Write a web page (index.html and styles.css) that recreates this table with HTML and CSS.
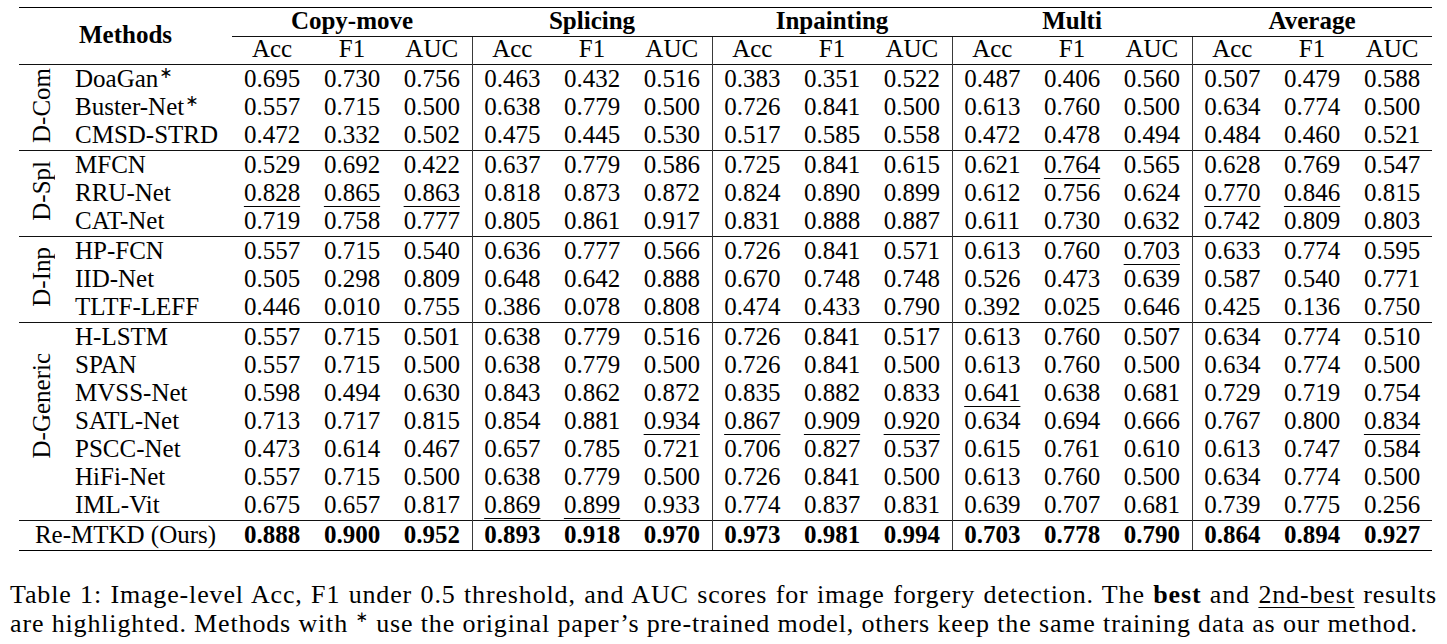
FILE: index.html
```html
<!DOCTYPE html>
<html>
<head>
<meta charset="utf-8">
<link rel="stylesheet" href="styles.css">
</head>
<body>
<div class="page">
<table class="results">
<colgroup>
<col class="c-grp"><col class="c-name">
<col class="c-num"><col class="c-num"><col class="c-num">
<col class="c-num"><col class="c-num"><col class="c-num">
<col class="c-num"><col class="c-num"><col class="c-num">
<col class="c-num"><col class="c-num"><col class="c-num">
<col class="c-num"><col class="c-num"><col class="c-num">
</colgroup>
<thead>
<tr class="h1">
<th class="methods" colspan="2" rowspan="2">Methods</th>
<th class="group" colspan="3">Copy-move</th>
<th class="group" colspan="3">Splicing</th>
<th class="group" colspan="3">Inpainting</th>
<th class="group" colspan="3">Multi</th>
<th class="group" colspan="3">Average</th>
</tr>
<tr class="h2">
<th>Acc</th><th>F1</th><th>AUC</th>
<th class="gs">Acc</th><th>F1</th><th>AUC</th>
<th class="gs">Acc</th><th>F1</th><th>AUC</th>
<th class="gs">Acc</th><th>F1</th><th>AUC</th>
<th class="gs">Acc</th><th>F1</th><th>AUC</th>
</tr>
</thead>
<tbody>
<tr class="first rule">
<td class="cat" rowspan="3"><span class="vlabel">D-Com</span></td>
<td class="name">DoaGan<sup class="ast">∗</sup></td>
<td>0.695</td><td>0.730</td><td>0.756</td>
<td class="gs">0.463</td><td>0.432</td><td>0.516</td>
<td class="gs">0.383</td><td>0.351</td><td>0.522</td>
<td class="gs">0.487</td><td>0.406</td><td>0.560</td>
<td class="gs">0.507</td><td>0.479</td><td>0.588</td>
</tr>
<tr>
<td class="name">Buster-Net<sup class="ast">∗</sup></td>
<td>0.557</td><td>0.715</td><td>0.500</td>
<td class="gs">0.638</td><td>0.779</td><td>0.500</td>
<td class="gs">0.726</td><td>0.841</td><td>0.500</td>
<td class="gs">0.613</td><td>0.760</td><td>0.500</td>
<td class="gs">0.634</td><td>0.774</td><td>0.500</td>
</tr>
<tr>
<td class="name">CMSD-STRD</td>
<td>0.472</td><td>0.332</td><td>0.502</td>
<td class="gs">0.475</td><td>0.445</td><td>0.530</td>
<td class="gs">0.517</td><td>0.585</td><td>0.558</td>
<td class="gs">0.472</td><td>0.478</td><td>0.494</td>
<td class="gs">0.484</td><td>0.460</td><td>0.521</td>
</tr>

<tr class="first rule">
<td class="cat" rowspan="3"><span class="vlabel">D-Spl</span></td>
<td class="name">MFCN</td>
<td>0.529</td><td>0.692</td><td>0.422</td>
<td class="gs">0.637</td><td>0.779</td><td>0.586</td>
<td class="gs">0.725</td><td>0.841</td><td>0.615</td>
<td class="gs">0.621</td><td><span class="u">0.764</span></td><td>0.565</td>
<td class="gs">0.628</td><td>0.769</td><td>0.547</td>
</tr>
<tr>
<td class="name">RRU-Net</td>
<td><span class="u">0.828</span></td><td><span class="u">0.865</span></td><td><span class="u">0.863</span></td>
<td class="gs">0.818</td><td>0.873</td><td>0.872</td>
<td class="gs">0.824</td><td>0.890</td><td>0.899</td>
<td class="gs">0.612</td><td>0.756</td><td>0.624</td>
<td class="gs"><span class="u">0.770</span></td><td><span class="u">0.846</span></td><td>0.815</td>
</tr>
<tr>
<td class="name">CAT-Net</td>
<td>0.719</td><td>0.758</td><td>0.777</td>
<td class="gs">0.805</td><td>0.861</td><td>0.917</td>
<td class="gs">0.831</td><td>0.888</td><td>0.887</td>
<td class="gs">0.611</td><td>0.730</td><td>0.632</td>
<td class="gs">0.742</td><td>0.809</td><td>0.803</td>
</tr>

<tr class="first rule">
<td class="cat" rowspan="3"><span class="vlabel">D-Inp</span></td>
<td class="name">HP-FCN</td>
<td>0.557</td><td>0.715</td><td>0.540</td>
<td class="gs">0.636</td><td>0.777</td><td>0.566</td>
<td class="gs">0.726</td><td>0.841</td><td>0.571</td>
<td class="gs">0.613</td><td>0.760</td><td><span class="u">0.703</span></td>
<td class="gs">0.633</td><td>0.774</td><td>0.595</td>
</tr>
<tr>
<td class="name">IID-Net</td>
<td>0.505</td><td>0.298</td><td>0.809</td>
<td class="gs">0.648</td><td>0.642</td><td>0.888</td>
<td class="gs">0.670</td><td>0.748</td><td>0.748</td>
<td class="gs">0.526</td><td>0.473</td><td>0.639</td>
<td class="gs">0.587</td><td>0.540</td><td>0.771</td>
</tr>
<tr>
<td class="name">TLTF-LEFF</td>
<td>0.446</td><td>0.010</td><td>0.755</td>
<td class="gs">0.386</td><td>0.078</td><td>0.808</td>
<td class="gs">0.474</td><td>0.433</td><td>0.790</td>
<td class="gs">0.392</td><td>0.025</td><td>0.646</td>
<td class="gs">0.425</td><td>0.136</td><td>0.750</td>
</tr>

<tr class="first rule">
<td class="cat generic" rowspan="7"><span class="vlabel">D-Generic</span></td>
<td class="name">H-LSTM</td>
<td>0.557</td><td>0.715</td><td>0.501</td>
<td class="gs">0.638</td><td>0.779</td><td>0.516</td>
<td class="gs">0.726</td><td>0.841</td><td>0.517</td>
<td class="gs">0.613</td><td>0.760</td><td>0.507</td>
<td class="gs">0.634</td><td>0.774</td><td>0.510</td>
</tr>
<tr>
<td class="name">SPAN</td>
<td>0.557</td><td>0.715</td><td>0.500</td>
<td class="gs">0.638</td><td>0.779</td><td>0.500</td>
<td class="gs">0.726</td><td>0.841</td><td>0.500</td>
<td class="gs">0.613</td><td>0.760</td><td>0.500</td>
<td class="gs">0.634</td><td>0.774</td><td>0.500</td>
</tr>
<tr>
<td class="name">MVSS-Net</td>
<td>0.598</td><td>0.494</td><td>0.630</td>
<td class="gs">0.843</td><td>0.862</td><td>0.872</td>
<td class="gs">0.835</td><td>0.882</td><td>0.833</td>
<td class="gs"><span class="u">0.641</span></td><td>0.638</td><td>0.681</td>
<td class="gs">0.729</td><td>0.719</td><td>0.754</td>
</tr>
<tr>
<td class="name">SATL-Net</td>
<td>0.713</td><td>0.717</td><td>0.815</td>
<td class="gs">0.854</td><td>0.881</td><td><span class="u">0.934</span></td>
<td class="gs"><span class="u">0.867</span></td><td><span class="u">0.909</span></td><td><span class="u">0.920</span></td>
<td class="gs">0.634</td><td>0.694</td><td>0.666</td>
<td class="gs">0.767</td><td>0.800</td><td><span class="u">0.834</span></td>
</tr>
<tr>
<td class="name">PSCC-Net</td>
<td>0.473</td><td>0.614</td><td>0.467</td>
<td class="gs">0.657</td><td>0.785</td><td>0.721</td>
<td class="gs">0.706</td><td>0.827</td><td>0.537</td>
<td class="gs">0.615</td><td>0.761</td><td>0.610</td>
<td class="gs">0.613</td><td>0.747</td><td>0.584</td>
</tr>
<tr>
<td class="name">HiFi-Net</td>
<td>0.557</td><td>0.715</td><td>0.500</td>
<td class="gs">0.638</td><td>0.779</td><td>0.500</td>
<td class="gs">0.726</td><td>0.841</td><td>0.500</td>
<td class="gs">0.613</td><td>0.760</td><td>0.500</td>
<td class="gs">0.634</td><td>0.774</td><td>0.500</td>
</tr>
<tr>
<td class="name">IML-Vit</td>
<td>0.675</td><td>0.657</td><td>0.817</td>
<td class="gs"><span class="u">0.869</span></td><td><span class="u">0.899</span></td><td>0.933</td>
<td class="gs">0.774</td><td>0.837</td><td>0.831</td>
<td class="gs">0.639</td><td>0.707</td><td>0.681</td>
<td class="gs">0.739</td><td>0.775</td><td>0.256</td>
</tr>

<tr class="ours rule">
<td class="ours-name" colspan="2">Re-MTKD (Ours)</td>
<td>0.888</td><td>0.900</td><td>0.952</td>
<td class="gs">0.893</td><td>0.918</td><td>0.970</td>
<td class="gs">0.973</td><td>0.981</td><td>0.994</td>
<td class="gs">0.703</td><td>0.778</td><td>0.790</td>
<td class="gs">0.864</td><td>0.894</td><td>0.927</td>
</tr>
</tbody>
</table>

<p class="caption"><span class="cap-line">Table 1: Image-level Acc, F1 under 0.5 threshold, and AUC scores for image forgery detection. The <b>best</b> and <span class="u2">2nd-best</span> results</span> are highlighted. Methods with <sup class="ast2">∗</sup> use the original paper’s pre-trained model, others keep the same training data as our method.</p>
</div>
</body>
</html>
```
FILE: styles.css
```css
html, body {
  margin: 0;
  padding: 0;
  background: #ffffff;
}

.page {
  padding: 7px 0 0 10px;
  width: 1427px;
  color: #000;
  font-family: "Liberation Serif", "Times New Roman", "DejaVu Serif", serif;
}

.results {
  margin-left: 9px;
  width: 1413px;
  table-layout: fixed;
  border-collapse: collapse;
  font-size: 25px;
  line-height: 24px;
}

.c-grp { width: 44px; }
.c-name { width: 169px; }
.c-num { width: 80px; }

.results th,
.results td {
  padding: 1px 0 3px;
  text-align: center;
  vertical-align: middle;
  white-space: nowrap;
}

.results thead tr.h1 th {
  border-top: 1px solid #000;
  font-weight: bold;
  padding-top: 1px;
  padding-bottom: 3px;
}

.results thead tr.h1 th.group {
  border-bottom: 1px solid #111;
}

.results thead tr.h1 th.methods {
  padding-top: 0;
  padding-bottom: 2px;
}

.results thead tr.h2 th {
  font-weight: normal;
  padding-top: 0;
  padding-bottom: 3px;
}

.results .gs {
  border-left: 1px solid #3a3a3a;
}

.results tbody tr.first td {
  padding-top: 2px;
  padding-bottom: 3px;
}

.results tbody tr.rule td {
  border-top: 1px solid #111;
}

.results tbody td.name {
  text-align: left;
  padding-left: 12px;
}

.results tbody td.cat {
  vertical-align: middle;
  padding: 0;
}

.results tbody td.cat.generic {
  padding-bottom: 30px;
}

.vlabel {
  display: inline-block;
  writing-mode: vertical-rl;
  transform: rotate(180deg);
  line-height: 25px;
}

.ast {
  font-size: 16px;
  line-height: 0;
  vertical-align: 9px;
  margin-left: 1px;
  font-family: "DejaVu Sans", sans-serif;
}

.u {
  text-decoration: underline;
  text-decoration-thickness: 1px;
  text-underline-offset: 5px;
}

.results tr.ours td {
  font-weight: bold;
  padding-top: 2px;
  padding-bottom: 3px;
  border-bottom: 1px solid #000;
}

.results tr.ours td.ours-name {
  font-weight: normal;
}

.caption {
  margin: 29px 0 0 0;
  font-size: 26px;
  line-height: 29px;
  letter-spacing: 0.85px;
}

.cap-line {
  display: block;
  text-align: justify;
  text-align-last: justify;
  white-space: nowrap;
}

.u2 {
  text-decoration: underline;
  text-decoration-thickness: 1px;
  text-underline-offset: 4px;
}

.ast2 {
  font-size: 15px;
  line-height: 0;
  vertical-align: 10px;
  font-family: "DejaVu Sans", sans-serif;
}
```
